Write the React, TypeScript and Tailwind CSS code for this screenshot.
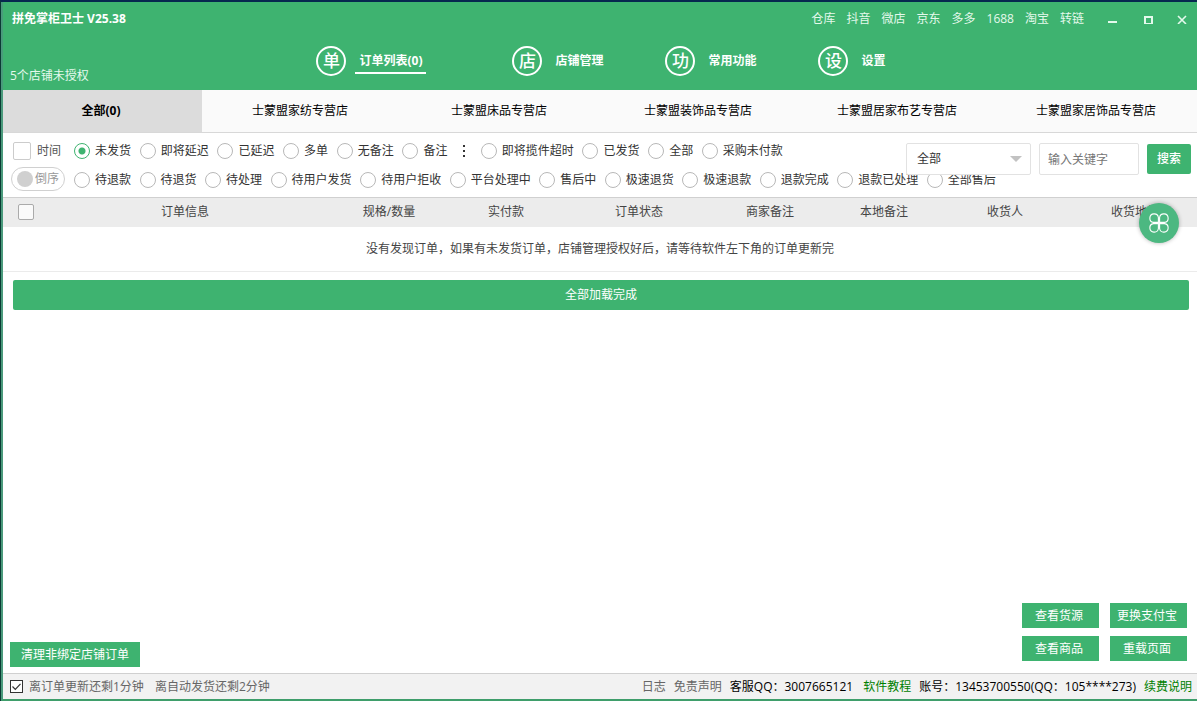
const platforms = ["仓库", "抖音", "微店", "京东", "多多", "1688", "淘宝", "转链"];

const navItems = [
  { mark: "单", label: "订单列表(0)", active: true },
  { mark: "店", label: "店铺管理", active: false },
  { mark: "功", label: "常用功能", active: false },
  { mark: "设", label: "设置", active: false },
];

const shops = [
  "全部(0)",
  "士蒙盟家纺专营店",
  "士蒙盟床品专营店",
  "士蒙盟装饰品专营店",
  "士蒙盟居家布艺专营店",
  "士蒙盟家居饰品专营店",
];

const mainFilters = ["未发货", "即将延迟", "已延迟", "多单", "无备注", "备注"];
const moreFilters = ["即将揽件超时", "已发货", "全部", "采购未付款"];
const refundFilters = [
  "待退款", "待退货", "待处理", "待用户发货", "待用户拒收", "平台处理中",
  "售后中", "极速退货", "极速退款", "退款完成", "退款已处理", "全部售后",
];

const columns = ["订单信息", "规格/数量", "实付款", "订单状态", "商家备注", "本地备注", "收货人", "收货地址"];

function FilterRadio({ label, checked = false }: { label: string; checked?: boolean }) {
  return (
    <label className="flex items-center gap-[5px] whitespace-nowrap">
      <input
        type="radio"
        name="order-filter"
        defaultChecked={checked}
        className="size-4 shrink-0 appearance-none rounded-full border border-[#b8b8b8] bg-white checked:border-[#3eb370] checked:bg-[radial-gradient(circle,#3eb370_3px,white_4px)]"
      />
      {label}
    </label>
  );
}

function TitleBar() {
  return (
    <div className="flex h-[34px] items-center">
      <h1 className="flex-1 pl-[9px] font-bold">拼免掌柜卫士 V25.38</h1>
      <div className="mr-[11px] flex gap-[11px]">
        {platforms.map((p) => (
          <a key={p} href="#" className="text-[#e4f9ec]">{p}</a>
        ))}
      </div>
      <button aria-label="最小化" className="flex h-8 w-9 items-center justify-center">
        <svg width="10" height="10" viewBox="0 0 10 10" stroke="#e4f9ec" strokeWidth="2"><path d="M0 8H9" /></svg>
      </button>
      <button aria-label="最大化" className="flex h-8 w-9 items-center justify-center">
        <svg width="10" height="10" viewBox="0 0 10 10" fill="none" stroke="#e4f9ec" strokeWidth="2"><path d="M1 3H8V10H1Z" /></svg>
      </button>
      <button aria-label="关闭" className="flex h-8 w-[30px] items-center justify-center">
        <svg width="10" height="10" viewBox="0 0 10 10" stroke="#e4f9ec" strokeWidth="1.6"><path d="M1 2L9 10M9 2L1 10" /></svg>
      </button>
    </div>
  );
}

function Header() {
  return (
    <header className="bg-[#3eb370] text-white">
      <TitleBar />
      <div className="grid h-[54px] grid-cols-[1fr_auto_1fr]">
        <p className="self-end pb-[5px] pl-[7px] text-[#e4f9ec]">5个店铺未授权</p>
        <nav className="grid grid-cols-[196px_153px_153px_auto] items-center pb-1 pl-[6px]">
          {navItems.map((n) => (
            <a key={n.mark} href="#" className="flex items-center gap-[9px]">
              <span className="flex size-[30px] items-center justify-center rounded-full border-2 border-white text-[17px] font-medium">
                {n.mark}
              </span>
              <span className={`border-b-2 px-1 pt-1 pb-[2px] font-bold ${n.active ? "border-white" : "border-transparent"}`}>
                {n.label}
              </span>
            </a>
          ))}
        </nav>
      </div>
    </header>
  );
}

function ShopTabs() {
  return (
    <div className="flex h-[43px] border-b border-[#d8d8d8] bg-[#fafafa] text-black">
      {shops.map((s, i) => (
        <button key={s} className={`flex-1 pr-[3px] ${i === 0 ? "bg-[#dcdcdc] font-bold" : ""}`}>{s}</button>
      ))}
    </div>
  );
}

function Filters() {
  return (
    <div className="relative flex h-[64px] pt-1 pl-2 text-[#333]">
      <div className="w-[63px] shrink-0">
        <label className="flex h-7 items-center gap-[6px] pl-[2px] text-[#555]">
          <input type="checkbox" className="size-[18px] appearance-none rounded-[2px] border border-[#ccc]" />
          时间
        </label>
        <label className="mt-[2px] flex h-6 w-[54px] items-center gap-[2px] rounded-full border border-[#d0d0d0] pl-[5px] whitespace-nowrap text-[#999]">
          <input type="checkbox" className="size-4 shrink-0 appearance-none rounded-full bg-[#d0d0d0]" />
          倒序
        </label>
      </div>
      <div className="min-w-0 flex-1">
        <div className="flex h-7 max-w-[709px] items-center justify-between">
          {mainFilters.map((f, i) => <FilterRadio key={f} label={f} checked={i === 0} />)}
          <button aria-label="更多" className="flex w-4 justify-center">
            <svg width="4" height="12" viewBox="0 0 4 12" fill="#333">
              <rect x="1" y="0" width="2" height="2" />
              <rect x="1" y="5" width="2" height="2" />
              <rect x="1" y="10" width="2" height="2" />
            </svg>
          </button>
          {moreFilters.map((f) => <FilterRadio key={f} label={f} />)}
        </div>
        <div className="flex h-[30px] max-w-[922px] items-center justify-between">
          {refundFilters.map((f) => <FilterRadio key={f} label={f} />)}
        </div>
      </div>

      {/* Search sits over the end of the second filter row */}
      <form className="absolute top-[10px] right-[6px] flex items-center gap-2">
        <div className="relative">
          <select aria-label="搜索范围" className="h-8 w-[125px] appearance-none rounded-[2px] border border-[#e2e2e2] bg-white px-[10px]">
            <option>全部</option>
          </select>
          <svg width="12" height="6" viewBox="0 0 12 6" fill="#c2c2c2" className="pointer-events-none absolute top-[13px] right-[9px]">
            <path d="M0 0H12L6 6Z" />
          </svg>
        </div>
        <input
          type="text"
          aria-label="关键字"
          placeholder="输入关键字"
          className="h-8 w-[100px] rounded-[2px] border border-[#e2e2e2] bg-white px-2 placeholder:text-[#757575]"
        />
        <button type="button" className="h-[30px] w-11 rounded-[2px] bg-[#3eb370] font-medium text-white">搜索</button>
      </form>
    </div>
  );
}

function Orders() {
  return (
    <table className="w-full table-fixed text-[#444]">
      <colgroup>
        <col className="w-[32px]" />
        <col className="w-[300px]" />
        <col className="w-[108px]" />
        <col className="w-[126px]" />
        <col className="w-[140px]" />
        <col className="w-[122px]" />
        <col className="w-[106px]" />
        <col className="w-[136px]" />
        <col className="w-[124px]" />
      </colgroup>
      <thead>
        <tr className="h-[29px] border-t border-[#d0d0d0] bg-[#ececec]">
          <th className="pl-[15px]">
            <input type="checkbox" aria-label="全选" className="block size-4 appearance-none rounded-[2px] border border-[#aaa] bg-[#fafafa]" />
          </th>
          {columns.map((c) => <th key={c} className="font-normal">{c}</th>)}
        </tr>
      </thead>
      <tbody>
        <tr className="h-[45px] border-b border-[#ebebeb]">
          <td colSpan={9} className="text-center">
            没有发现订单，如果有未发货订单，店铺管理授权好后，请等待软件左下角的订单更新完
          </td>
        </tr>
      </tbody>
    </table>
  );
}

function Actions() {
  const btn = "h-[25px] bg-[#3eb370] text-white";
  return (
    <div className="mt-auto flex items-end justify-between pr-[10px] pb-[6px] pl-[7px]">
      <button className={`${btn} px-[11px]`}>清理非绑定店铺订单</button>
      <div className="grid grid-cols-[77px_77px] gap-x-[11px] gap-y-2 pb-[6px]">
        <button className={`${btn} pr-[3px]`}>查看货源</button>
        <button className={`${btn} pr-[3px]`}>更换支付宝</button>
        <button className={`${btn} pr-[3px]`}>查看商品</button>
        <button className={`${btn} pr-[3px]`}>重载页面</button>
      </div>
    </div>
  );
}

function StatusBar() {
  return (
    <footer className="flex h-[26px] items-center border-t border-[#d0d0d0] bg-[#f2f2f2] pr-[5px] pl-[7px] text-[#666]">
      <label className="flex items-center gap-[6px]">
        <span className="relative flex">
          <input type="checkbox" defaultChecked className="size-[13px] appearance-none border border-[#333] bg-white" />
          <svg width="13" height="13" viewBox="0 0 13 13" fill="none" stroke="#333" strokeWidth="1.2" className="pointer-events-none absolute inset-0">
            <path d="M2.5 6.5L5.3 9.3L10.5 3.8" />
          </svg>
        </span>
        离订单更新还剩1分钟
      </label>
      <span className="ml-[11px]">离自动发货还剩2分钟</span>
      <div className="ml-auto flex gap-2">
        <a href="#">日志</a>
        <a href="#">免责声明</a>
        <span className="mr-[2px] text-black">客服QQ：3007665121</span>
        <a href="#" className="text-[#008000]">软件教程</a>
        <span className="text-black">账号：13453700550(QQ：105****273)</span>
        <a href="#" className="text-[#008000]">续费说明</a>
      </div>
    </footer>
  );
}

export default function App() {
  return (
    <div className="border-t-2 border-l border-t-[#06284f] border-l-[#0b3b34] font-['Open_Sans','Noto_Sans_CJK_SC',sans-serif] text-[12px] leading-[18px]">
      <div className="flex min-h-[calc(100vh-2px)] flex-col border-b-2 border-l-2 border-b-[#3f9e6b] border-l-[#4a9a7c] bg-white">
        <Header />
        <ShopTabs />
        <Filters />
        <main className="relative">
          <Orders />
          <button
            aria-label="快捷菜单"
            className="absolute top-[6px] right-[18px] flex size-10 items-center justify-center rounded-full bg-[#4cb881] shadow-[0_0_4px_rgba(0,0,0,0.3)]"
          >
            <svg width="22" height="22" viewBox="0 0 22 22" fill="none" stroke="white" strokeWidth="1.1">
              <path d="M10.4 10.4H5.5A4.3 4.3 0 1 1 10.4 5.5Z" />
              <path d="M11.6 10.4V5.5A4.3 4.3 0 1 1 16.5 10.4Z" />
              <path d="M11.6 11.6H16.5A4.3 4.3 0 1 1 11.6 16.5Z" />
              <path d="M10.4 11.6V16.5A4.3 4.3 0 1 1 5.5 11.6Z" />
            </svg>
          </button>
        </main>
        <button className="mt-2 mr-2 ml-[10px] h-[30px] rounded-[2px] bg-[#3eb370] text-white">全部加载完成</button>
        <Actions />
        <StatusBar />
      </div>
    </div>
  );
}
